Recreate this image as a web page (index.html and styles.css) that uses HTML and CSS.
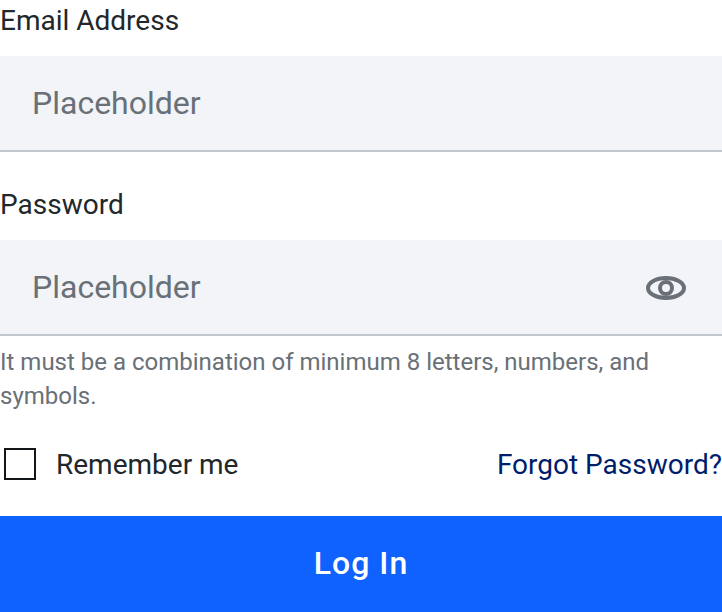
FILE: index.html
```html
<!DOCTYPE html>
<html lang="en">
<head>
<meta charset="utf-8">
<title>Log In</title>
<link rel="stylesheet" href="styles.css">
</head>
<body>
<form class="login">
  <div class="field">
    <label class="label" for="email">Email Address</label>
    <div class="control"><input class="input" id="email" type="text" placeholder="Placeholder"></div>
  </div>
  <div class="field field-password">
    <label class="label" for="password">Password</label>
    <div class="control">
      <input class="input" id="password" type="password" placeholder="Placeholder">
      <svg class="eye" viewBox="0 0 40 24" aria-hidden="true">
        <ellipse cx="20" cy="12" rx="18" ry="10"/>
        <circle cx="20" cy="12" r="6"/>
      </svg>
    </div>
    <p class="hint">It must be a combination of minimum 8 letters, numbers, and symbols.</p>
  </div>
  <div class="options">
    <label class="remember"><input class="checkbox" type="checkbox"><span>Remember me</span></label>
    <a class="forgot">Forgot Password?</a>
  </div>
  <button class="submit" type="button">Log In</button>
</form>
</body>
</html>
```

FILE: styles.css
```css
* {
  box-sizing: border-box;
}

body {
  margin: 0;
  background: #fff;
  color: #21272a;
  font-family: Roboto, sans-serif;
  overflow: hidden;
}

.login {
  display: flex;
  flex-direction: column;
  width: 722px;
  height: 612px;
}

.label {
  display: block;
  height: 42px;
  margin-bottom: 14px;
  font-size: 28px;
  line-height: 42px;
}

.field-password {
  margin-top: 32px;
}

.control {
  display: flex;
  align-items: center;
  height: 96px;
  padding: 0 36px 0 32px;
  background: #f2f4f8;
  border-bottom: 2px solid #c1c7cd;
}

.input {
  flex: 1;
  min-width: 0;
  padding: 0;
  border: 0;
  outline: 0;
  background: transparent;
  font: 32px/44px Roboto, sans-serif;
}

.input::placeholder {
  color: #697077;
  opacity: 1;
}

.eye {
  width: 40px;
  height: 24px;
  margin-top: 2px;
  fill: none;
  stroke: #697077;
  stroke-width: 4;
}

.hint {
  margin: 9px 0 0;
  color: #697077;
  font-size: 24px;
  line-height: 34px;
}

.options {
  display: flex;
  align-items: center;
  justify-content: space-between;
  height: 40px;
  margin-top: 31px;
  font-size: 28px;
  line-height: 40px;
}

.remember {
  display: flex;
  align-items: center;
  gap: 20px;
  padding-left: 4px;
}

.remember span,
.forgot {
  padding-top: 2px;
}

.checkbox {
  appearance: none;
  width: 32px;
  height: 32px;
  margin: 0;
  border: 2px solid #121619;
  background: #fff;
}

.forgot {
  color: #001d6c;
}

.submit {
  height: 96px;
  margin-top: auto;
  padding: 0 0 2px;
  border: 0;
  background: #0f62fe;
  color: #fff;
  font: 500 32px/32px Roboto, sans-serif;
  letter-spacing: 1px;
}
```
